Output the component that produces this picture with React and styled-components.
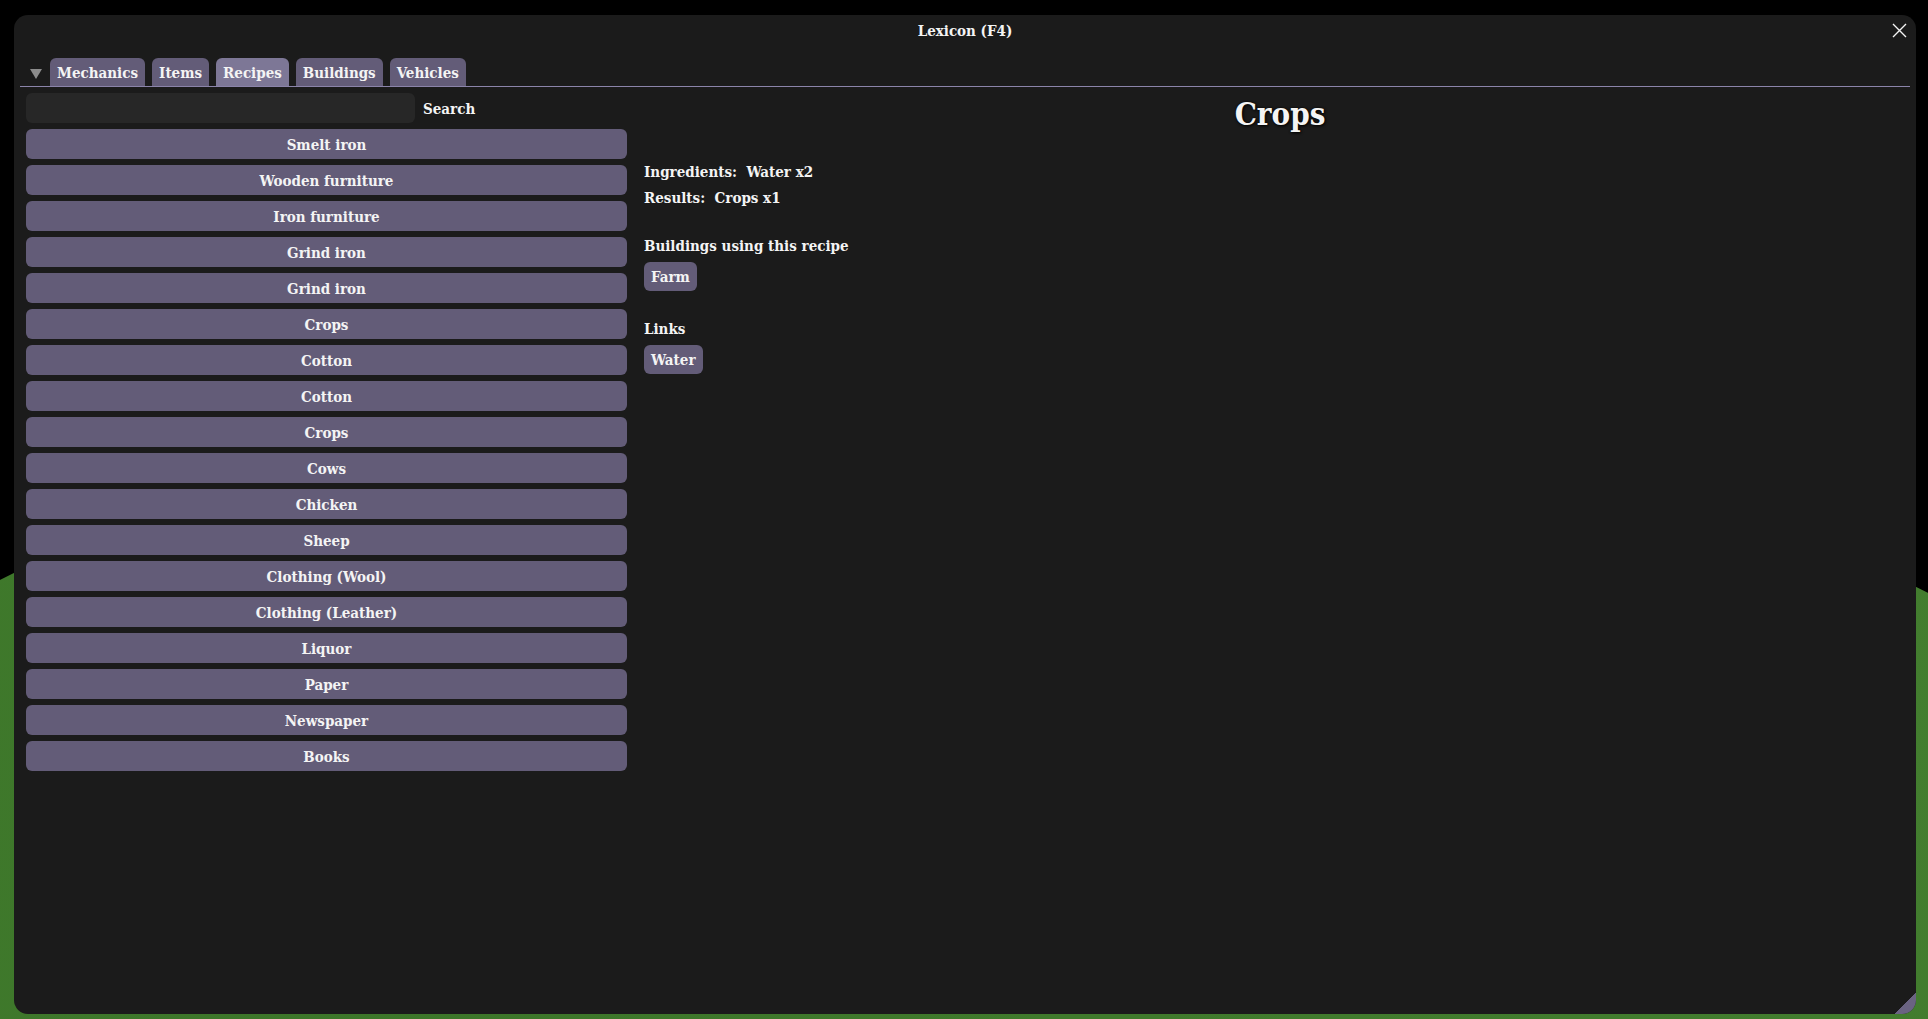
import React from "react";
import styled, { createGlobalStyle } from "styled-components";

const GlobalStyle = createGlobalStyle`
  html, body {
    margin: 0;
    padding: 0;
    background: #000;
  }
  body {
    font-family: "DejaVu Serif", serif;
    font-stretch: condensed;
    color: #f4f4f4;
  }
  * {
    box-sizing: border-box;
  }
`;

const RECIPES = [
  "Smelt iron",
  "Wooden furniture",
  "Iron furniture",
  "Grind iron",
  "Grind iron",
  "Crops",
  "Cotton",
  "Cotton",
  "Crops",
  "Cows",
  "Chicken",
  "Sheep",
  "Clothing (Wool)",
  "Clothing (Leather)",
  "Liquor",
  "Paper",
  "Newspaper",
  "Books",
];

const TABS = ["Mechanics", "Items", "Recipes", "Buildings", "Vehicles"];

const Scene = styled.div`
  position: relative;
  width: 100%;
  height: 100vh;
  padding: 15px 12px 5px 14px;
  display: flex;
  overflow: hidden;
`;

// the game world behind the window
const Terrain = styled.div`
  position: absolute;
  inset: 0;
  background: radial-gradient(circle at 20% 80%, #3c7529 0, transparent 40%),
    radial-gradient(circle at 90% 70%, #447f30 0, transparent 35%), #407a2c;
  clip-path: polygon(0 580px, 951px 104px, 100% 593px, 100% 100%, 0 100%);
`;

const Window = styled.div`
  position: relative;
  z-index: 1;
  flex: 1;
  display: flex;
  flex-direction: column;
  background: #1b1b1b;
  border-radius: 14px;
  overflow: hidden;
`;

const TitleBar = styled.div`
  height: 30px;
  display: grid;
  grid-template-columns: 1fr auto 1fr;
  align-items: center;
`;

const Title = styled.div`
  grid-column: 2;
  font-size: 15px;
  font-weight: bold;
  padding-top: 1px;
`;

const CloseButton = styled.div`
  grid-column: 3;
  justify-self: end;
  margin-right: 9px;
  width: 16px;
  height: 16px;
  display: flex;
  align-items: center;
  justify-content: center;
`;

const TabBar = styled.div`
  margin: 13px 6px 0;
  height: 29px;
  display: flex;
  align-items: flex-end;
  gap: 7px;
  border-bottom: 1px solid #8b84aa;
`;

const Caret = styled.div`
  align-self: center;
  margin: 3px 1px 0 10px;
  width: 0;
  height: 0;
  border-left: 6.5px solid transparent;
  border-right: 6.5px solid transparent;
  border-top: 10px solid #8c8c8c;
`;

const Tab = styled.div`
  height: 28px;
  padding: 2px 7px 0;
  display: flex;
  align-items: center;
  border-radius: 6px 6px 0 0;
  background: ${(p) => (p.$active ? "#7d7796" : "#635c78")};
  font-size: 15px;
  font-weight: bold;
`;

const Body = styled.div`
  flex: 1;
  display: grid;
  grid-template-columns: 601px 1fr;
  gap: 17px;
  padding: 6px 0 0 12px;
`;

const ListColumn = styled.div`
  display: flex;
  flex-direction: column;
  gap: 6px;
`;

const SearchRow = styled.div`
  display: flex;
  align-items: center;
  gap: 8px;
`;

const SearchInput = styled.div`
  width: 389px;
  height: 30px;
  border-radius: 6px;
  background: #272727;
`;

const SearchLabel = styled.span`
  font-size: 15px;
  font-weight: bold;
  padding-top: 2px;
`;

const RecipeButton = styled.div`
  height: 30px;
  padding-top: 2px;
  display: flex;
  align-items: center;
  justify-content: center;
  border-radius: 6px;
  background: #635c78;
  font-size: 15px;
  font-weight: bold;
`;

const Detail = styled.div`
  display: flex;
  flex-direction: column;
  align-items: flex-start;
  padding-top: 1px;
`;

const Heading = styled.div`
  align-self: stretch;
  text-align: center;
  font-size: 31px;
  line-height: 40px;
  font-weight: bold;
  text-shadow: 1px 1px 3px #000, 0 0 2px rgba(0, 0, 0, 0.8);
  margin-bottom: 25px;
`;

const InfoLine = styled.div`
  font-size: 15px;
  font-weight: bold;
  line-height: 26px;
  white-space: pre;
`;

const SectionLabel = styled.div`
  margin-top: ${(p) => p.$gap}px;
  margin-bottom: 3px;
  font-size: 15px;
  font-weight: bold;
  line-height: 26px;
`;

const Chip = styled.div`
  height: 29px;
  padding: 1px 7px 0;
  display: flex;
  align-items: center;
  border-radius: 6px;
  background: #635c78;
  font-size: 15px;
  font-weight: bold;
`;

const Footer = styled.div`
  height: 22px;
  display: flex;
  justify-content: flex-end;
`;

const ResizeGrip = styled.div`
  width: 22px;
  height: 22px;
  background: linear-gradient(135deg, transparent 50%, #6a6382 50%);
`;

export default function App() {
  return (
    <>
      <GlobalStyle />
      <Scene>
        <Terrain />
        <Window>
          <TitleBar>
            <Title>Lexicon (F4)</Title>
            <CloseButton>
              <svg width="15" height="15" viewBox="0 0 15 15">
                <path
                  d="M1 1 L14 14 M14 1 L1 14"
                  stroke="#f4f4f4"
                  strokeWidth="1.4"
                  fill="none"
                />
              </svg>
            </CloseButton>
          </TitleBar>
          <TabBar>
            <Caret />
            {TABS.map((tab) => (
              <Tab key={tab} $active={tab === "Recipes"}>
                {tab}
              </Tab>
            ))}
          </TabBar>
          <Body>
            <ListColumn>
              <SearchRow>
                <SearchInput />
                <SearchLabel>Search</SearchLabel>
              </SearchRow>
              {RECIPES.map((name, i) => (
                <RecipeButton key={i}>{name}</RecipeButton>
              ))}
            </ListColumn>
            <Detail>
              <Heading>Crops</Heading>
              <InfoLine>Ingredients:  Water x2</InfoLine>
              <InfoLine>Results:  Crops x1</InfoLine>
              <SectionLabel $gap={22}>Buildings using this recipe</SectionLabel>
              <Chip>Farm</Chip>
              <SectionLabel $gap={25}>Links</SectionLabel>
              <Chip>Water</Chip>
            </Detail>
          </Body>
          <Footer>
            <ResizeGrip />
          </Footer>
        </Window>
      </Scene>
    </>
  );
}
